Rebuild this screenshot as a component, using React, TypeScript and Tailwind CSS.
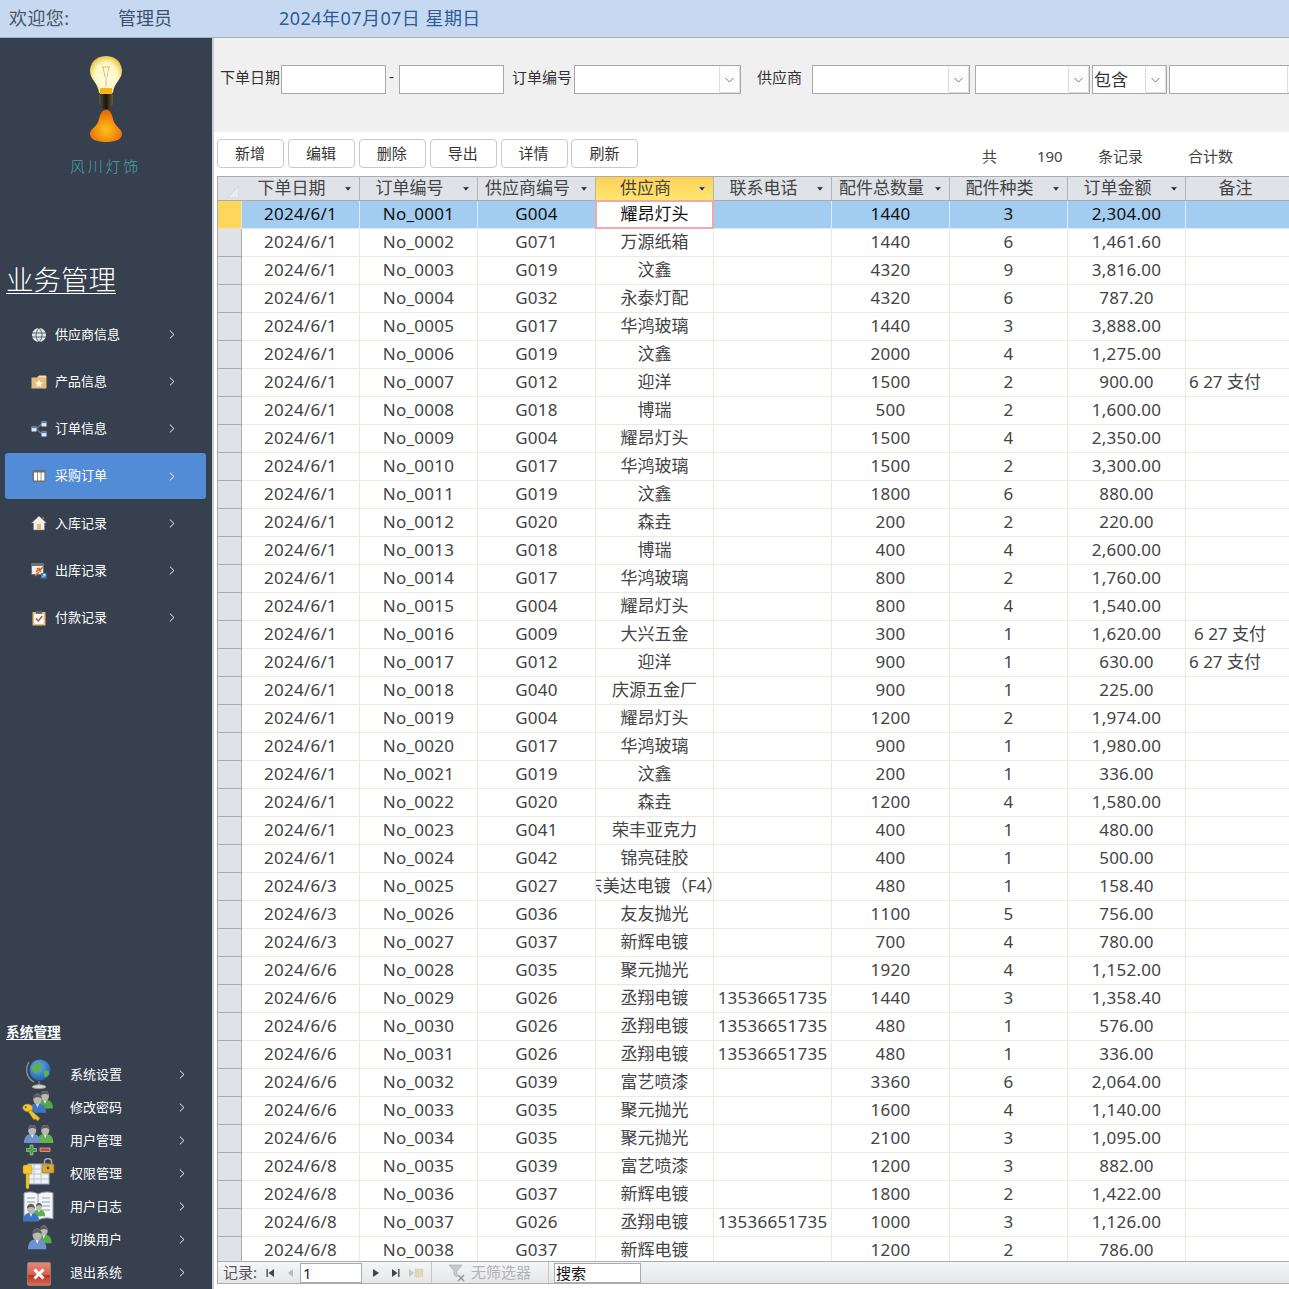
import React from "react";

const rowsRaw = `2024/6/1|G004|耀昂灯头||1440|3|2,304.00|
2024/6/1|G071|万源纸箱||1440|6|1,461.60|
2024/6/1|G019|汶鑫||4320|9|3,816.00|
2024/6/1|G032|永泰灯配||4320|6|787.20|
2024/6/1|G017|华鸿玻璃||1440|3|3,888.00|
2024/6/1|G019|汶鑫||2000|4|1,275.00|
2024/6/1|G012|迎洋||1500|2|900.00|6 27 支付
2024/6/1|G018|博瑞||500|2|1,600.00|
2024/6/1|G004|耀昂灯头||1500|4|2,350.00|
2024/6/1|G017|华鸿玻璃||1500|2|3,300.00|
2024/6/1|G019|汶鑫||1800|6|880.00|
2024/6/1|G020|森垚||200|2|220.00|
2024/6/1|G018|博瑞||400|4|2,600.00|
2024/6/1|G017|华鸿玻璃||800|2|1,760.00|
2024/6/1|G004|耀昂灯头||800|4|1,540.00|
2024/6/1|G009|大兴五金||300|1|1,620.00|+6 27 支付
2024/6/1|G012|迎洋||900|1|630.00|6 27 支付
2024/6/1|G040|庆源五金厂||900|1|225.00|
2024/6/1|G004|耀昂灯头||1200|2|1,974.00|
2024/6/1|G017|华鸿玻璃||900|1|1,980.00|
2024/6/1|G019|汶鑫||200|1|336.00|
2024/6/1|G020|森垚||1200|4|1,580.00|
2024/6/1|G041|荣丰亚克力||400|1|480.00|
2024/6/1|G042|锦亮硅胶||400|1|500.00|
2024/6/3|G027|东美达电镀（F4）||480|1|158.40|
2024/6/3|G036|友友抛光||1100|5|756.00|
2024/6/3|G037|新辉电镀||700|4|780.00|
2024/6/6|G035|聚元抛光||1920|4|1,152.00|
2024/6/6|G026|丞翔电镀|13536651735|1440|3|1,358.40|
2024/6/6|G026|丞翔电镀|13536651735|480|1|576.00|
2024/6/6|G026|丞翔电镀|13536651735|480|1|336.00|
2024/6/6|G039|富艺喷漆||3360|6|2,064.00|
2024/6/6|G035|聚元抛光||1600|4|1,140.00|
2024/6/6|G035|聚元抛光||2100|3|1,095.00|
2024/6/8|G039|富艺喷漆||1200|3|882.00|
2024/6/8|G037|新辉电镀||1800|2|1,422.00|
2024/6/8|G026|丞翔电镀|13536651735|1000|3|1,126.00|
2024/6/8|G037|新辉电镀||1200|2|786.00|`;

const rows = rowsRaw.split("\n").map((l) => l.split("|"));
const headers = ["下单日期", "订单编号", "供应商编号", "供应商", "联系电话", "配件总数量", "配件种类", "订单金额", "备注"];

function Chevron({ className }: { className?: string }) {
  return (
    <svg viewBox="0 0 8 12" className={className} fill="none" stroke="#ffffff" strokeWidth="1.25">
      <path d="M1.2 0.8 L6.6 6 L1.2 11.2" />
    </svg>
  );
}

function DropArrow() {
  return (
    <svg viewBox="0 0 9 9" className="w-[9px] h-[9px]" fill="none" stroke="#555" strokeWidth="0.8">
      <path d="M0.5 3 L4.5 7 L8.5 3" />
    </svg>
  );
}

function SortArrow() {
  return (
    <svg viewBox="0 0 9 6" className="w-[8px] h-[6px] shrink-0">
      <path d="M0.5 0.5 H8.5 L4.5 5.5 Z" fill="#2f2f2f" stroke="#fff" strokeWidth="0.7" />
    </svg>
  );
}

function Bulb() {
  return (
    <svg viewBox="0 0 40 90" className="w-[40px] h-[90px]">
      <defs>
        <radialGradient id="gl" cx="50%" cy="55%" r="55%">
          <stop offset="0%" stopColor="#fffde8" />
          <stop offset="65%" stopColor="#fff7c4" />
          <stop offset="100%" stopColor="#e9c64a" />
        </radialGradient>
        <radialGradient id="sh" cx="50%" cy="62%" r="55%">
          <stop offset="0%" stopColor="#ffc21c" />
          <stop offset="100%" stopColor="#e86f05" />
        </radialGradient>
        <linearGradient id="bs" x1="0" x2="1" y1="0" y2="0">
          <stop offset="0%" stopColor="#554" />
          <stop offset="50%" stopColor="#1b1308" />
          <stop offset="100%" stopColor="#6a5a3a" />
        </linearGradient>
      </defs>
      <path d="M20 1 C8 1 4 10 4 16 C4 25 12 27 13 38 H27 C28 27 36 25 36 16 C36 10 32 1 20 1 Z" fill="url(#gl)" />
      <path d="M17 12 L19 22 M23 12 L21 22 M16 12 H24 M20 22 V32" stroke="#d9bb62" strokeWidth="0.9" fill="none" />
      <path d="M14 33 H26 V39 H14 Z" fill="#f7b21f" />
      <path d="M13 39 H27 V49 L23 54 H17 L13 49 Z" fill="url(#bs)" />
      <path d="M20 55 C26 55 26 62 28 67 C30 72 36 74 36 79 C36 85 28 87 20 87 C12 87 4 85 4 79 C4 74 10 72 12 67 C14 62 14 55 20 55 Z" fill="url(#sh)" />
    </svg>
  );
}

const sm = "w-[16px] h-[16px]";
const SmallIcons: React.ReactNode[] = [
  <svg key="0" viewBox="0 0 16 16" className={sm}>
    <circle cx="8" cy="8" r="7" fill="#e6e6e6" />
    <path d="M1 6 H15 M1 10 H15 M8 1 C4 5 4 11 8 15 M8 1 C12 5 12 11 8 15" stroke="#5a6270" strokeWidth="1" fill="none" />
  </svg>,
  <svg key="1" viewBox="0 0 16 16" className={sm}>
    <path d="M0.5 3.5 H6 L7 2 H15.5 V14.5 H0.5 Z" fill="#e8bd78" />
    <path d="M8 1.5 H15 V3.5 H8 Z" fill="#f6dfb5" />
    <path d="M8 5.5 L9.2 8.2 L12 8.5 L9.9 10.3 L10.6 13 L8 11.6 L5.4 13 L6.1 10.3 L4 8.5 L6.8 8.2 Z" fill="#fff" />
  </svg>,
  <svg key="2" viewBox="0 0 16 16" className={sm}>
    <path d="M5 8 L11 3 M5 8 L11 13" stroke="#6e7480" strokeWidth="1.4" />
    <rect x="0.5" y="5.5" width="5" height="5" fill="#dfe6ef" />
    <rect x="0.5" y="5.5" width="5" height="1.6" fill="#3f7ec4" />
    <rect x="10.5" y="0.5" width="5" height="5" fill="#dfe6ef" />
    <rect x="10.5" y="0.5" width="5" height="1.6" fill="#3f7ec4" />
    <rect x="10.5" y="10.5" width="5" height="5" fill="#dfe6ef" />
    <rect x="10.5" y="10.5" width="5" height="1.6" fill="#3f7ec4" />
  </svg>,
  <svg key="3" viewBox="0 0 16 16" className={sm}>
    <rect x="1.5" y="2" width="13" height="12" fill="#6f6f73" />
    <rect x="3" y="4.5" width="3" height="8" fill="#fff" />
    <rect x="6.7" y="4.5" width="3" height="8" fill="#fff" />
    <rect x="10.4" y="4.5" width="3" height="8" fill="#fff" />
  </svg>,
  <svg key="4" viewBox="0 0 16 16" className={sm}>
    <path d="M8 1 L15.5 8 H13.5 V15 H2.5 V8 H0.5 Z" fill="#f1f1ee" stroke="#777" strokeWidth="0.5" />
    <path d="M6 9 H10 V15 H6 Z" fill="#eeb96a" />
    <path d="M11 2 H13 V5 L11 3.5 Z" fill="#b9502e" />
  </svg>,
  <svg key="5" viewBox="0 0 16 16" className={sm}>
    <rect x="0.5" y="0.5" width="12" height="11" fill="#eceff3" stroke="#666" strokeWidth="0.8" />
    <rect x="0.5" y="0.5" width="12" height="2.5" fill="#6b6f76" />
    <path d="M5 9 L9 5 M6 5 L10 9 M4 13 L8 9 M9 7 L12 4" stroke="#d96a14" strokeWidth="1.6" />
    <rect x="10" y="10" width="5.5" height="5.5" fill="#3b80c8" />
    <path d="M11.5 14 L14 11.5 M12 11.5 H14 V13.5" stroke="#fff" strokeWidth="0.8" fill="none" />
  </svg>,
  <svg key="6" viewBox="0 0 16 16" className={sm}>
    <rect x="1.5" y="2" width="13" height="13.5" rx="0.5" fill="#e7bd7a" />
    <rect x="3.3" y="4" width="9.4" height="9.8" fill="#fff" />
    <rect x="5" y="0.8" width="6" height="3" fill="#5c5f66" />
    <path d="M5 8.5 L7.3 11 L11.3 6" stroke="#cc3b30" strokeWidth="1.4" fill="none" />
  </svg>,
];

function Person({ x, y, s, c }: { x: number; y: number; s: number; c: string }) {
  return (
    <g transform={`translate(${x} ${y}) scale(${s})`}>
      <path d="M0 22 C0 14 4 11 10 11 C16 11 20 14 20 22 Z" fill={c} />
      <path d="M8 11 H12 L10 16 Z" fill="#fff" />
      <ellipse cx="10" cy="6" rx="5" ry="6.5" fill="#b9b9b4" />
      <path d="M5 6 C5 1 8 0 10 0 C13 0 15 2 15 6 C13 3 8 3 5 6 Z" fill="#5d5d5d" />
    </g>
  );
}

const lg = "w-[34px] h-[32px]";
const Key = ({ t }: { t: string }) => (
  <g transform={t}>
    <ellipse cx="5" cy="4.5" rx="5" ry="3.8" fill="#f0c33c" stroke="#a97e14" strokeWidth="0.5" />
    <circle cx="3" cy="4" r="1" fill="#6a5a24" />
    <path d="M8 6.5 L18 14 L15.8 17 L13.5 15 L12 16 L6 8.5 Z" fill="#efc038" stroke="#a97e14" strokeWidth="0.5" />
  </g>
);
const BigIcons: React.ReactNode[] = [
  <svg key="0" viewBox="0 0 34 32" className={lg}>
    <defs>
      <radialGradient id="gb" cx="40%" cy="35%" r="70%">
        <stop offset="0%" stopColor="#6db5ef" />
        <stop offset="100%" stopColor="#1b5ca8" />
      </radialGradient>
    </defs>
    <path d="M7 4 C3 10 4 20 12 24" stroke="#8a8a88" strokeWidth="1.4" fill="none" />
    <circle cx="18" cy="12" r="10.5" fill="url(#gb)" />
    <path d="M11 7 C14 4 19 5 20 8 C22 12 17 11 16 14 C14 17 11 14 10 11 Z M22 13 C25 11 28 13 27 16 C26 19 23 20 22 18 Z" fill="#5bb04a" />
    <path d="M17 23 V27 M10 29 C11 26 23 26 24 29 C22 31 12 31 10 29 Z" stroke="#999" fill="#d8d8d4" strokeWidth="1" />
  </svg>,
  <svg key="1" viewBox="0 0 34 32" className={lg}>
    <Person x={15} y={0} s={0.8} c="#54a845" />
    <Person x={7} y={3} s={0.85} c="#3f74c4" />
    <Key t="translate(1 12) rotate(4)" />
  </svg>,
  <svg key="2" viewBox="0 0 34 32" className={lg}>
    <Person x={15} y={0} s={0.82} c="#62b24e" />
    <Person x={2} y={0} s={0.82} c="#6f92cf" />
    <path d="M8 20 H11 V23.5 H14.5 V26.5 H11 V30 H8 V26.5 H4.5 V23.5 H8 Z" fill="#3fa33a" stroke="#fff" strokeWidth="0.4" />
    <rect x="18" y="23" width="10" height="3.4" fill="#c9463a" stroke="#f3d5c8" strokeWidth="0.6" />
  </svg>,
  <svg key="3" viewBox="0 0 34 32" className={lg}>
    <rect x="6" y="6" width="21" height="20" fill="#eef2f7" stroke="#a9b1bd" />
    <path d="M6 11 H27 M6 16 H27 M6 21 H27 M12 6 V26 M19 6 V26" stroke="#b8c1cc" strokeWidth="0.9" />
    <rect x="20" y="6" width="12" height="9" rx="1" fill="#d9a63c" stroke="#8f6b1a" strokeWidth="0.6" />
    <path d="M22.5 6 V3 C22.5 0 29.5 0 29.5 3 V6" stroke="#a5a5a5" strokeWidth="1.5" fill="none" />
    <circle cx="26" cy="10" r="1.4" fill="#5c4412" />
    <rect x="1" y="7" width="9" height="9" rx="2" fill="#f2c832" stroke="#b08a14" strokeWidth="0.5" />
    <path d="M4 16 H7 V30 L5.5 31 L4 30 Z" fill="#f2c832" stroke="#b08a14" strokeWidth="0.5" />
  </svg>,
  <svg key="4" viewBox="0 0 34 32" className={lg}>
    <path d="M2 2 C8 0 13 1 16 3 C20 1 26 0 31 2 V28 C26 26 20 27 16 29 C13 27 7 26 2 28 Z" fill="#f3f5f7" stroke="#8d97a4" />
    <path d="M20 7 H28 M20 11 H28 M20 15 H28 M20 19 H28 M5 7 H13 M5 11 H13" stroke="#8fa0b4" strokeWidth="1" />
    <path d="M16 3 V29" stroke="#9aa3ad" />
    <Person x={11} y={12} s={0.6} c="#5faf4c" />
    <Person x={1} y={13} s={0.8} c="#3f74c4" />
  </svg>,
  <svg key="5" viewBox="0 0 34 32" className={lg}>
    <Person x={14} y={2} s={0.78} c="#56ab47" />
    <Person x={6} y={5} s={0.92} c="#6f92cf" />
  </svg>,
  <svg key="6" viewBox="0 0 34 32" className={lg}>
    <defs>
      <linearGradient id="rx" x1="0" x2="0" y1="0" y2="1">
        <stop offset="0%" stopColor="#e8897a" />
        <stop offset="55%" stopColor="#d5604f" />
        <stop offset="56%" stopColor="#b93020" />
        <stop offset="100%" stopColor="#d9705c" />
      </linearGradient>
    </defs>
    <rect x="5.5" y="5.5" width="23" height="23" rx="1.5" fill="url(#rx)" stroke="#8f8077" />
    <path d="M12.5 12.5 L21.5 21.5 M21.5 12.5 L12.5 21.5" stroke="#fff" strokeWidth="3" />
  </svg>,
];

const menu = ["供应商信息", "产品信息", "订单信息", "采购订单", "入库记录", "出库记录", "付款记录"];
const sys = ["系统设置", "修改密码", "用户管理", "权限管理", "用户日志", "切换用户", "退出系统"];

function Combo({ w, children }: { w: string; children?: React.ReactNode }) {
  return (
    <div className={`${w} h-[29px] shrink-0 bg-white border border-[#a9a9a9] flex items-center justify-between`}>
      <span className="pl-[1px] text-[17px] text-[#333] leading-none">{children}</span>
      <span className="w-[21px] h-[27px] shrink-0 bg-[#fdfdfd] border-l border-b border-r border-[#dcdcdc] rounded-[2px] flex items-center justify-center">
        <DropArrow />
      </span>
    </div>
  );
}

function Input({ w }: { w: string }) {
  return <div className={`${w} h-[29px] shrink-0 bg-white border border-[#a9a9a9]`} />;
}

const buttons = ["新增", "编辑", "删除", "导出", "详情", "刷新"];
const labelCls = "mt-[1px] shrink-0 whitespace-nowrap";

export default function App() {
  return (
    <div className="w-[1289px] h-[1289px] overflow-hidden flex flex-col bg-white [font-family:'Noto_Sans','Noto_Sans_CJK_SC',sans-serif]">
      {/* top bar */}
      <div className="h-[38px] shrink-0 bg-[#c6d9f1] border-b border-[#a7b0bb] flex items-center text-[18px]">
        <span className="ml-[9px] w-[109px] text-[#4a5666] tracking-[0.4px]">欢迎您:</span>
        <span className="w-[161px] text-[#3b5070]">管理员</span>
        <span className="text-[#2f5a97] tracking-[0.45px]">2024年07月07日 星期日</span>
      </div>

      <div className="flex-1 min-h-0 flex">
        {/* sidebar */}
        <div className="w-[212px] shrink-0 bg-[#36404f] flex flex-col overflow-hidden">
          <div className="h-[17px] shrink-0" />
          <div className="flex justify-center pr-[1px]">
            <Bulb />
          </div>
          <div className="mt-[11px] text-center pr-[1px] text-[15px] tracking-[2.7px] font-light text-[#4aa3a8] leading-[20px]">风川灯饰</div>
          <div className="mt-[85px] ml-[6px] text-[27.5px] font-light leading-[38px] text-white underline underline-offset-[3px] decoration-1">业务管理</div>
          <div className="mt-[12px] flex flex-col">
            {menu.map((m, i) => {
              const on = i === 3;
              return (
                <div key={m} className="h-[47.2px] flex items-center">
                  <div className={`mx-[5px] w-[201px] h-[46px] rounded-[3px] flex items-center ${on ? "bg-[#528bd6]" : ""}`}>
                    <span className="ml-[26px] w-[24px] shrink-0">{SmallIcons[i]}</span>
                    <span className="w-[114px] text-[13px] text-white">{m}</span>
                    <Chevron className="w-[6px] h-[11px]" />
                  </div>
                </div>
              );
            })}
          </div>
          <div className="mt-auto -mb-[0.5px] flex flex-col">
            <div className="ml-[6px] mb-[15.5px] text-[13.7px] font-bold text-white underline underline-offset-[2px] leading-[20px]">系统管理</div>
            {sys.map((m, i) => (
              <div key={m} className="h-[33.1px] flex items-center">
                <span className="ml-[22px] w-[48px] shrink-0">{BigIcons[i]}</span>
                <span className="w-[109px] text-[13px] text-white">{m}</span>
                <Chevron className="w-[6px] h-[11px]" />
              </div>
            ))}
          </div>
        </div>

        {/* main */}
        <div className="flex-1 min-w-0 border-l-2 border-[#c9ccd0] flex flex-col overflow-hidden">
          {/* filter */}
          <div className="h-[94px] shrink-0 bg-[#f0f0f0] pt-[27px] pl-[6px] flex items-start text-[15px] text-[#333] overflow-hidden">
            <span className={`${labelCls} w-[61px]`}>下单日期</span>
            <Input w="w-[105px]" />
            <span className="w-[13px] shrink-0 pl-[3px]">-</span>
            <Input w="w-[105px]" />
            <span className={`${labelCls} ml-[8px] w-[62px]`}>订单编号</span>
            <Combo w="w-[167px]" />
            <span className={`${labelCls} ml-[16px] w-[55px]`}>供应商</span>
            <Combo w="w-[158px]" />
            <div className="w-[5px] shrink-0" />
            <Combo w="w-[115px]" />
            <div className="w-[2px] shrink-0" />
            <Combo w="w-[75px]">包含</Combo>
            <div className="w-[2px] shrink-0" />
            <Combo w="w-[140px]" />
          </div>

          {/* toolbar */}
          <div className="h-[44px] shrink-0 pt-[7px] pl-[3px] flex items-start">
            <div className="flex gap-[3.9px]">
              {buttons.map((b) => (
                <div key={b} className="w-[67px] h-[29px] bg-white border border-[#c9c9c9] rounded-[4px] flex items-center justify-center pr-[1px] text-[15px] text-[#333]">
                  {b}
                </div>
              ))}
            </div>
            <div className="ml-[343.5px] mt-[7px] flex text-[15px] text-[#444] leading-[20px]">
              <span className="w-[55px]">共</span>
              <span className="w-[61px]">190</span>
              <span className="w-[90px]">条记录</span>
              <span>合计数</span>
            </div>
          </div>

          {/* datasheet */}
          <div className="flex-1 min-h-0 ml-[3px] overflow-hidden border-l border-[#a9adb3] text-[17px] text-[#444]">
            <div className="h-[25px] flex bg-[#dfe3e8] border-t border-b border-[#a9adb3] w-[1090px]">
              <div className="w-[24px] shrink-0 flex items-end justify-end pr-[3px] pb-[2px]">
                <svg viewBox="0 0 12 12" className="w-[12px] h-[12px]">
                  <path d="M12 0 V12 H0 Z" fill="#e9ecef" stroke="#c5cad1" strokeWidth="0.7" />
                </svg>
              </div>
              {headers.map((h, i) => (
                <div
                  key={h}
                  className={`w-[118px] shrink-0 border-r border-[#b0b4ba] flex items-center pr-[7px] ${i === 3 ? "bg-gradient-to-b from-[#ffcf58] to-[#ffe86f]" : ""}`}
                >
                  <span className="flex-1 text-center whitespace-nowrap leading-none pb-[2px] pr-[4px] pl-[1px]">{h}</span>
                  <SortArrow />
                </div>
              ))}
            </div>
            {rows.map((r, idx) => {
              const sel = idx === 0;
              const cells = [r[0], `No_${String(idx + 1).padStart(4, "0")}`, r[1], r[2], r[3], r[4], r[5], r[6], r[7]];
              return (
                <div key={idx} className={`h-[28px] flex w-[1090px] ${sel ? "bg-[#a3cdf0] text-[#111]" : ""}`}>
                  <div className={`w-[24px] shrink-0 border-r border-b ${sel ? "bg-[#ffd65c] border-[#e8e4d4]" : "bg-[#dfe3e8] border-[#a9adb3]"}`} />
                  {cells.map((c, j) => {
                    const cur = sel && j === 3;
                    const note = j === 8;
                    const indented = note && c.startsWith("+");
                    return (
                      <div
                        key={j}
                        className={`w-[118px] shrink-0 flex items-center overflow-hidden whitespace-nowrap leading-none pb-[2px] ${j === 3 || note ? "" : "tracking-[0.25px]"} ${note ? (indented ? "pl-[8px]" : "pl-[3px]") : "justify-center"} ${
                          cur
                            ? "bg-white border-2 border-[#f4a6aa] -mt-[1px] h-[29px] -ml-[1px] w-[119px]"
                            : sel
                              ? "border-r border-b border-[#dcecf9]"
                              : "border-r border-b border-[#ece9df]"
                        }`}
                      >
                        {indented ? c.slice(1) : c}
                      </div>
                    );
                  })}
                </div>
              );
            })}
          </div>

          {/* record navigator */}
          <div className="h-[23px] mb-[5px] shrink-0 ml-[3px] border-l border-t border-b border-[#a9adb3] bg-gradient-to-b from-[#f4f5f7] to-[#e6e7e9] flex items-center text-[15px] text-[#555]">
            <span className="ml-[5px] w-[43px] shrink-0 whitespace-nowrap">记录:</span>
            <svg viewBox="0 0 8 8" className="w-[8px] h-[8px]"><path d="M0.5 0 H1.8 V8 H0.5 Z M8 0 V8 L2.5 4 Z" fill="#444" /></svg>
            <svg viewBox="0 0 8 8" className="ml-[13px] w-[8px] h-[8px]"><path d="M6 0 V8 L1 4 Z" fill="#bbb" /></svg>
            <div className="ml-[5px] w-[62px] h-[20px] bg-white border border-[#a9adb3] pl-[2px] text-[15px] leading-[19px] text-[#222]">1</div>
            <svg viewBox="0 0 8 8" className="ml-[10px] w-[8px] h-[8px]"><path d="M1 0 V8 L7 4 Z" fill="#444" /></svg>
            <svg viewBox="0 0 8 8" className="ml-[12px] w-[8px] h-[8px]"><path d="M0 0 V8 L5.5 4 Z M6.2 0 H7.5 V8 H6.2 Z" fill="#444" /></svg>
            <svg viewBox="0 0 20 10" className="ml-[8px] w-[20px] h-[10px]">
              <path d="M1 1 V9 L6 5 Z" fill="#c5c5c5" />
              <rect x="7" y="1" width="8" height="8" fill="#e2d8b8" stroke="#d0c6a0" strokeWidth="0.8" strokeDasharray="1 1" />
            </svg>
            <div className="ml-[3px] w-[1px] h-[21px] bg-[#c3c5c9]" />
            <svg viewBox="0 0 18 18" className="ml-[16px] w-[18px] h-[18px]">
              <path d="M1 1 H14 L9 7 V13 L6 11 V7 Z" fill="#c9c9c9" stroke="#aaa" strokeWidth="0.6" />
              <path d="M10 11 L16 17 M16 11 L10 17" stroke="#999" strokeWidth="1.6" />
            </svg>
            <span className="ml-[5px] w-[77px] text-[#b3b3b3]">无筛选器</span>
            <div className="w-[1px] h-[21px] bg-[#c3c5c9]" />
            <div className="ml-[5px] w-[87px] h-[20px] bg-white border border-[#a9adb3] pl-[1px] text-[15px] leading-[19px] text-[#111]">搜索</div>
          </div>
        </div>
      </div>
    </div>
  );
}
